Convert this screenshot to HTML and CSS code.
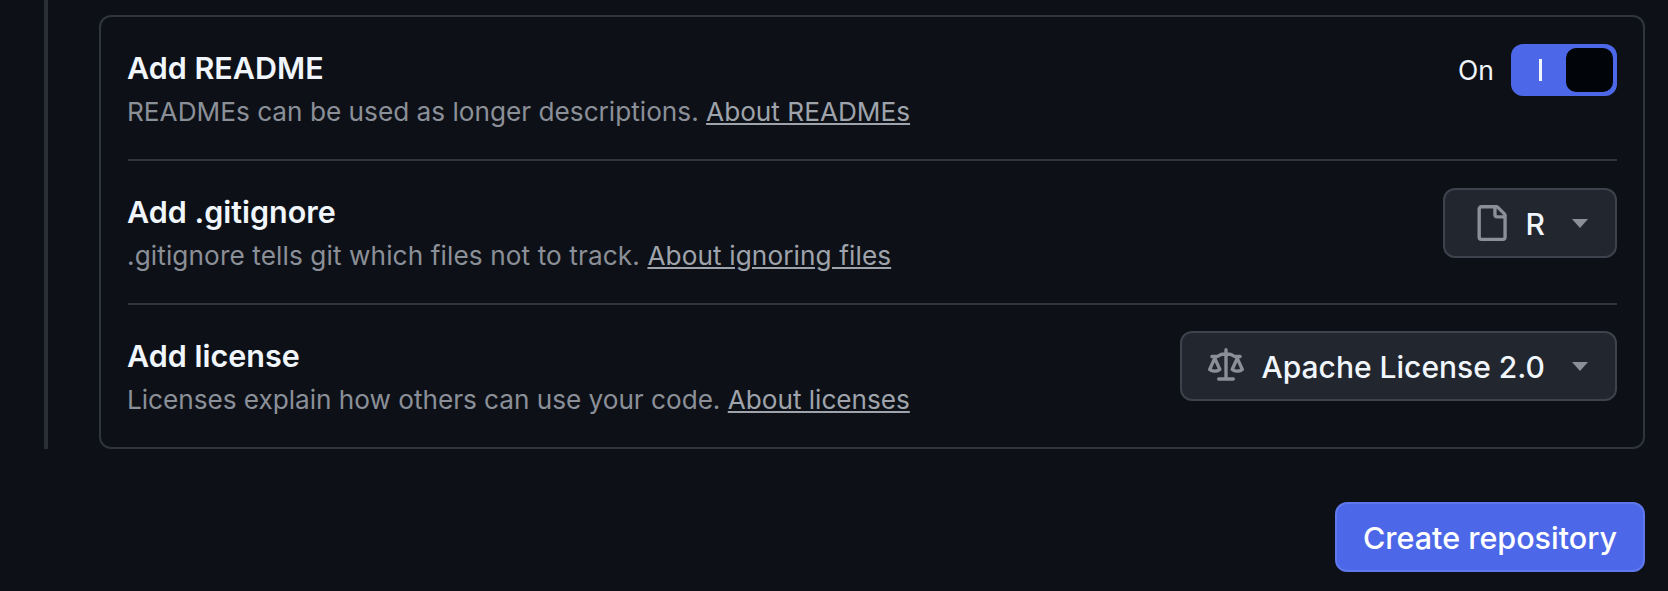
FILE: index.html
```html
<!DOCTYPE html>
<html lang="en">
<head>
<meta charset="utf-8">
<title>Create repository</title>
<link rel="stylesheet" href="styles.css">
</head>
<body>
<main class="page">
  <section class="rail">
    <div class="card">
      <div class="row row-first">
        <div class="info">
          <h3 class="title">Add README</h3>
          <p class="desc">READMEs can be used as longer descriptions. <a href="#" class="link">About READMEs</a></p>
        </div>
        <div class="toggle-wrap">
          <span class="on">On</span>
          <span class="toggle">
            <span class="toggle-side"><span class="toggle-bar"></span></span>
            <span class="knob"></span>
          </span>
        </div>
      </div>
      <div class="row">
        <div class="info">
          <h3 class="title">Add .gitignore</h3>
          <p class="desc desc-wide">.gitignore tells git which files not to track. <a href="#" class="link">About ignoring files</a></p>
        </div>
        <button class="select" type="button">
          <svg class="icon" viewBox="0 0 16 16" aria-hidden="true"><path d="M2 1.75C2 .784 2.784 0 3.75 0h6.586c.464 0 .909.184 1.237.513l2.914 2.914c.329.328.513.773.513 1.237v9.586A1.75 1.75 0 0 1 13.25 16h-9.5A1.75 1.75 0 0 1 2 14.25Zm1.75-.25a.25.25 0 0 0-.25.25v12.5c0 .138.112.25.25.25h9.5a.25.25 0 0 0 .25-.25V6h-2.75A1.75 1.75 0 0 1 9 4.25V1.5Zm6.75.062V4.25c0 .138.112.25.25.25h2.688l-.011-.013-2.914-2.914-.013-.011Z"/></svg>
          <span class="select-text">R</span>
          <span class="caret"></span>
        </button>
      </div>
      <div class="row row-last">
        <div class="info">
          <h3 class="title">Add license</h3>
          <p class="desc desc-tight">Licenses explain how others can use your code. <a href="#" class="link">About licenses</a></p>
        </div>
        <button class="select" type="button">
          <svg class="icon" viewBox="0 0 16 16" aria-hidden="true"><path d="M8.75.75V2h.985c.304 0 .603.08.867.231l1.29.736c.038.022.08.033.124.033h2.234a.75.75 0 0 1 0 1.5h-.427l2.111 4.692a.75.75 0 0 1-.154.838l-.53-.53.529.531-.001.002-.002.002-.006.006-.006.005-.01.01-.045.04c-.21.176-.441.327-.686.45C14.556 10.78 13.88 11 13 11a4.498 4.498 0 0 1-2.023-.454 3.544 3.544 0 0 1-.686-.45l-.045-.04-.016-.015-.006-.006-.004-.004v-.001a.75.75 0 0 1-.154-.838L12.178 4.5h-.162c-.305 0-.604-.079-.868-.231l-1.29-.736a.245.245 0 0 0-.124-.033H8.75V13h2.5a.75.75 0 0 1 0 1.5h-6.5a.75.75 0 0 1 0-1.5h2.5V3.5h-.984a.245.245 0 0 0-.124.033l-1.289.737c-.265.15-.564.23-.869.23h-.162l2.112 4.692a.75.75 0 0 1-.154.838l-.53-.53.529.531-.001.002-.002.002-.006.006-.016.015-.045.04c-.21.176-.441.327-.686.45C4.556 10.78 3.88 11 3 11a4.498 4.498 0 0 1-2.023-.454 3.544 3.544 0 0 1-.686-.45l-.045-.04-.016-.015-.006-.006-.004-.004v-.001a.75.75 0 0 1-.154-.838L2.178 4.5H1.75a.75.75 0 0 1 0-1.5h2.234a.249.249 0 0 0 .125-.033l1.288-.737c.265-.15.564-.23.869-.23h.984V.75a.75.75 0 0 1 1.5 0Zm2.945 8.477c.285.135.718.273 1.305.273s1.02-.138 1.305-.273L13 6.327Zm-10 0c.285.135.718.273 1.305.273s1.02-.138 1.305-.273L3 6.327Z"/></svg>
          <span class="select-text">Apache License 2.0</span>
          <span class="caret"></span>
        </button>
      </div>
    </div>
  </section>
  <div class="actions">
    <button class="primary" type="button">Create repository</button>
  </div>
</main>
</body>
</html>
```
FILE: styles.css
```css
* { box-sizing: border-box; }
html, body { margin: 0; height: 100%; }
body {
  background: #0d1117;
  color: #f0f6fc;
  font-family: Inter, "Liberation Sans", sans-serif;
  overflow: hidden;
}
.page { padding-left: 44px; padding-right: 23px; }
.rail {
  border-left: 4px solid #2a2e37;
  padding: 15px 0 0 51px;
  height: 449px;
}
.card {
  height: 434px;
  border: 2px solid #30343d;
  border-radius: 12px;
  padding: 0 26px 0 27px;
}
.row {
  display: flex;
  justify-content: space-between;
  align-items: flex-start;
  height: 144px;
  padding-top: 27px;
  border-top: 2px solid #30343d;
}
.row-first { height: 142px; border-top: 0; }
.row-last { padding-top: 26px; }
.info { padding-top: 2px; margin-left: -1px; }
.row-last .info { padding-top: 3px; }
.title { margin: 0; font-size: 30.5px; line-height: 44px; font-weight: 600; }
.desc { margin: 0; font-size: 26.2px; line-height: 44px; color: #8b8f98; font-weight: 400; }
.desc-wide { letter-spacing: 0.1px; }
.desc-tight { letter-spacing: -0.03px; }
.link { color: #9fa3ab; text-decoration: underline; }
.toggle-wrap { display: flex; align-items: center; gap: 17px; }
.on { font-size: 26.5px; font-weight: 400; }
.toggle {
  display: flex;
  width: 106px;
  height: 52px;
  padding: 4px;
  border-radius: 12px;
  background: #4c68e8;
}
.toggle-side { flex: 1; display: flex; align-items: center; justify-content: center; }
.toggle-bar { width: 3px; height: 22px; background: #f0f6fc; }
.knob { width: 47px; height: 44px; border-radius: 10px; background: #010409; }
.select {
  display: flex;
  align-items: center;
  justify-content: flex-end;
  min-width: 174px;
  height: 70px;
  padding: 0 27px 0 26px;
  border: 2px solid #3d424c;
  border-radius: 12px;
  background: #22262f;
  color: #f0f6fc;
  font: 500 30px Inter, "Liberation Sans", sans-serif;
}
.select-text { padding-top: 2px; }
.icon { width: 36px; height: 36px; margin-right: 17px; fill: #8b8f98; display: block; flex: none; }
.caret {
  width: 0; height: 0;
  margin-left: 27px;
  border-left: 8px solid transparent;
  border-right: 8px solid transparent;
  border-top: 9px solid #8b8f98;
}
.actions { display: flex; justify-content: flex-end; margin-top: 53px; }
.primary {
  width: 310px;
  height: 70px;
  border: 2px solid #5f79ec;
  border-radius: 12px;
  background: #4c68e8;
  color: #fff;
  font: 500 30.5px Inter, "Liberation Sans", sans-serif;
}
```
